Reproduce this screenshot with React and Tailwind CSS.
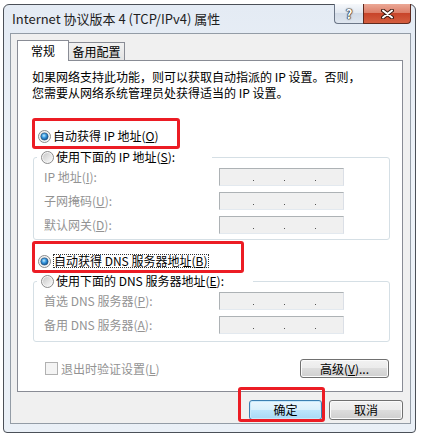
import React from 'react';

const cjk = "font-['Noto_Sans_CJK_SC',sans-serif]";

// Win7 style radio bullet
const Radio = ({ checked, id }) => (
  <svg width="13" height="13" viewBox="0 0 13 13" className="shrink-0">
    <defs>
      <linearGradient id={`rb-${id}`} x1="0" y1="0" x2="1" y2="1">
        <stop offset="0" stopColor="#c9c9c9" />
        <stop offset="1" stopColor="#fafafa" />
      </linearGradient>
      <radialGradient id={`rd-${id}`} cx="0.42" cy="0.38" r="0.65">
        <stop offset="0" stopColor="#c4ecfd" />
        <stop offset="0.45" stopColor="#3a9be2" />
        <stop offset="1" stopColor="#0d4c8a" />
      </radialGradient>
    </defs>
    <circle cx="6.5" cy="6.5" r="6" fill="#f5f5f5" stroke="#8b8b8b" />
    <circle cx="6.5" cy="6.5" r="4.6" fill={`url(#rb-${id})`} />
    {checked && <circle cx="6.5" cy="6.5" r="3.6" fill={`url(#rd-${id})`} stroke="#1d4f7c" strokeWidth="0.6" />}
  </svg>
);

const Key = ({ k }) => (
  <>
    (<span className="underline underline-offset-1">{k}</span>)
  </>
);

// campo de IP deshabilitado
const IpBox = () => (
  <div className="flex h-[18px] w-[125px] shrink-0 items-end border border-[#adb2b5] border-b-[#e3e9ef] border-r-[#dbdfe6] bg-[#f0f0f0] pb-[4px]">
    <div className="w-[33px]" />
    <span className="h-[1px] w-[1px] bg-[#555]" />
    <div className="w-[30px]" />
    <span className="h-[1px] w-[1px] bg-[#555]" />
    <div className="w-[30px]" />
    <span className="h-[1px] w-[1px] bg-[#555]" />
  </div>
);

const Row = ({ children }) => (
  <div className="flex h-[24px] items-center pl-[10px]">
    <div className="w-[175px] text-[#939393]">{children}</div>
    <IpBox />
  </div>
);

const Btn = ({ children, className = '', primary }) => (
  <button
    className={`flex items-center justify-center rounded-[3px] border text-[12px] text-black ${
      primary
        ? 'border-[#3c7fb1] bg-[linear-gradient(#eaf6fd_0%,#d9f0fc_50%,#bee6fd_50%,#a7d9f5_100%)] shadow-[inset_0_0_0_1px_#c8e9fb]'
        : 'border-[#707070] bg-[linear-gradient(#f2f2f2_0%,#ebebeb_50%,#dddddd_50%,#cfcfcf_100%)] shadow-[inset_0_0_0_1px_#fbfbfb]'
    } ${className}`}
  >
    {children}
  </button>
);

export default function App() {
  return (
    <div className={`relative h-[435px] w-[422px] overflow-hidden bg-white ${cjk}`}>
      {/* ventana */}
      <div className="ml-[3px] mt-[4px] flex h-[429px] w-[413px] flex-col rounded-t-[6px] rounded-b-[4px] border border-[#4b5058] bg-[linear-gradient(#e4ebf4,#eef3f9_40%,#eaf0f7)] pb-[8px] pl-[6px] pr-[4px]">
        {/* barra de título */}
        <div className="-ml-[6px] flex h-[28px] shrink-0 items-start">
          <span className="self-center pl-[8px] text-[13px] text-[#1e1e1e]">Internet 协议版本 4 (TCP/IPv4) 属性</span>
          <div className="-mt-[1px] ml-auto flex">
            <div className="flex h-[20px] w-[29px] items-center justify-center rounded-bl-[4px] border border-t-0 border-r-0 border-[#6b7687] bg-[linear-gradient(#f6f8fb_0%,#e3e9f1_45%,#d2dbe7_50%,#dfe6ef_100%)]">
              <span className="text-[13px] font-bold leading-none text-white [text-shadow:0_0_1px_#222,0_0_1px_#222,0_0_1px_#222,0_0_2px_#333]">?</span>
            </div>
            <div className="flex h-[20px] w-[48px] items-center justify-center rounded-br-[4px] border border-t-0 border-[#5e2a1f] bg-[linear-gradient(#eba896_0%,#dd806a_45%,#c8452a_50%,#d45e40_100%)]">
              <svg width="13" height="10" viewBox="0 0 13 10">
                <path d="M2 1.5 L11 8.5 M11 1.5 L2 8.5" stroke="#3b1a12" strokeWidth="4" strokeLinecap="round" />
                <path d="M2 1.5 L11 8.5 M11 1.5 L2 8.5" stroke="#ffffff" strokeWidth="2" strokeLinecap="round" />
              </svg>
            </div>
          </div>
        </div>

        {/* área cliente */}
        <div className="flex flex-1 flex-col border border-[#939ca6] bg-[#f0f0f0] pb-[3px] pl-[6px] pr-[7px] pt-[6px]">
          {/* pestañas */}
          <div className="flex h-[20px] items-end text-[12px] text-black">
            <div className="relative z-10 -mb-[1px] flex h-[21px] w-[52px] items-center justify-center border border-b-0 border-[#898c95] bg-white pb-[1px]">
              常规
            </div>
            <div className="-ml-[1px] flex h-[18px] w-[57px] items-center justify-center border border-b-0 border-[#898c95] bg-[linear-gradient(#f2f2f2,#e3e3e3)]">
              备用配置
            </div>
          </div>

          {/* panel */}
          <div className="flex h-[332px] w-[386px] flex-col border border-[#898c95] bg-white text-[12px] text-black">
            <div className="pl-[14px] pt-[8px] leading-[16px]">
              <div>如果网络支持此功能，则可以获取自动指派的 IP 设置。否则，</div>
              <div>您需要从网络系统管理员处获得适当的 IP 设置。</div>
            </div>

            <div className="ml-[14px] mt-[17px] h-[31px] w-[148px] rounded-[3px] border-[3px] border-[#ec1c24] pl-[3px] pt-[7px]">
              <div className="flex h-[16px] items-center gap-[2px]">
                <Radio checked id="a" />
                <span>自动获得 IP 地址<Key k="O" /></span>
              </div>
            </div>

            <fieldset className="ml-[15px] w-[357px] rounded-[3px] border border-[#d5dfe5] pb-[2px]">
              <legend className="ml-[3px] flex h-[16px] w-[175px] items-center gap-[2px] pl-[4px]">
                <Radio id="b" />
                <span>使用下面的 IP 地址<Key k="S" />:</span>
              </legend>
              <Row>IP 地址<Key k="I" />:</Row>
              <Row>子网掩码<Key k="U" />:</Row>
              <Row>默认网关<Key k="D" />:</Row>
            </fieldset>

            <div className="ml-[14px] mt-[1px] h-[32px] w-[212px] rounded-[3px] border-[3px] border-[#ec1c24] pl-[3px] pt-[9px]">
              <div className="flex h-[16px] items-center gap-[2px]">
                <Radio checked id="c" />
                <span className="flex h-[14px] items-center border border-dotted border-[#333] pr-[1px]">
                  自动获得 DNS 服务器地址<Key k="B" />
                </span>
              </div>
            </div>

            <fieldset className="ml-[15px] w-[357px] rounded-[3px] border border-[#d5dfe5] pb-[4px]">
              <legend className="ml-[3px] flex h-[16px] w-[216px] items-center gap-[2px] pl-[4px]">
                <Radio id="d" />
                <span>使用下面的 DNS 服务器地址<Key k="E" />:</span>
              </legend>
              <Row>首选 DNS 服务器<Key k="P" />:</Row>
              <Row>备用 DNS 服务器<Key k="A" />:</Row>
            </fieldset>

            <div className="mt-[17px] flex h-[19px] items-center justify-between pl-[27px] pr-[13px]">
              <div className="flex items-center gap-[3px] text-[#939393]">
                <span className="h-[13px] w-[13px] border border-[#b1b1b1] bg-[#f4f4f4]" />
                <span>退出时验证设置<Key k="L" /></span>
              </div>
              <Btn className="h-[19px] w-[89px]">高级<Key k="V" />...</Btn>
            </div>
          </div>

          {/* botones */}
          <div className="mt-[8px] flex justify-end gap-[7px]">
            <Btn primary className="h-[20px] w-[73px]">确定</Btn>
            <Btn className="h-[20px] w-[74px]">取消</Btn>
          </div>
        </div>
      </div>

      {/* marco rojo de anotación sobre el botón */}
      <div className="absolute left-[238px] top-[387px] h-[35px] w-[87px] rounded-[3px] border-[3px] border-[#ec1c24]" />
    </div>
  );
}
